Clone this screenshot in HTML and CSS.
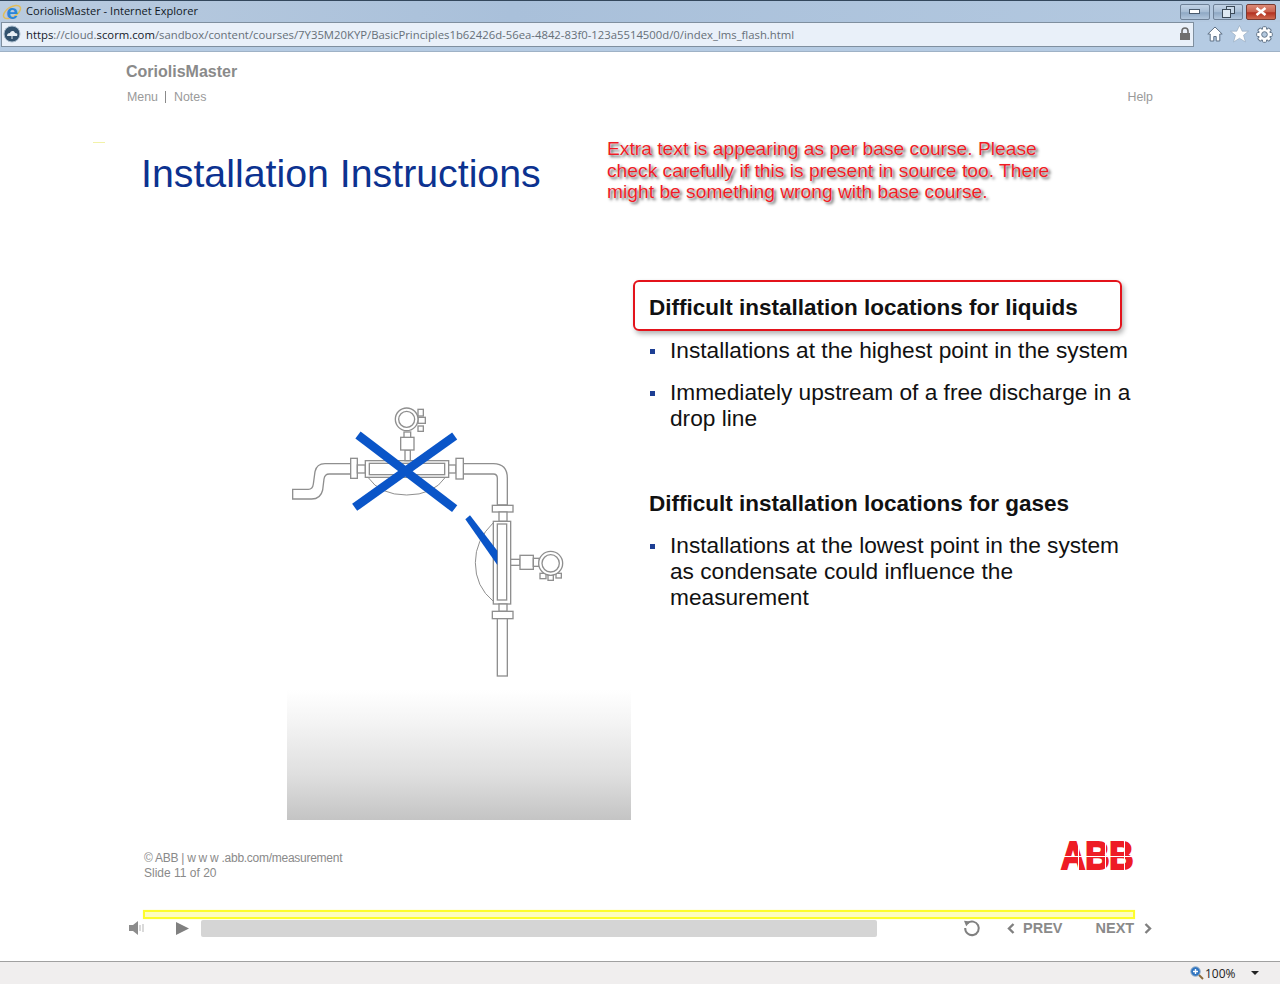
FILE: index.html
```html
<!DOCTYPE html>
<html>
<head>
  <title>CoriolisMaster - Internet Explorer</title>
  <link rel="stylesheet" href="styles.css">
</head>
<body>
  <div class="window">
    <div class="titlebar">
      <div class="ie-logo">
        <svg class="ie-ring" width="20" height="20" viewBox="0 0 20 20">
          <ellipse cx="10" cy="10" rx="9.500" ry="5" fill="none" stroke="#e0bd5a" stroke-width="1.500" transform="rotate(-32 10 10)"/>
        </svg>
        <span class="ie-letter">e</span>
      </div>
      <span class="window-title">CoriolisMaster - Internet Explorer</span>
      <div class="window-buttons">
        <div class="win-btn">
          <svg width="12" height="6" viewBox="0 0 12 6"><rect x="0.5" y="0.5" width="10" height="4" fill="#fff" stroke="#4a5a6c"/></svg>
        </div>
        <div class="win-btn">
          <svg width="13" height="12" viewBox="0 0 13 12"><rect x="4.5" y="0.5" width="8" height="7" fill="#c8d8e8" stroke="#3c4a58"/><rect x="0.5" y="3.5" width="8" height="8" fill="#dde8f2" stroke="#3c4a58"/></svg>
        </div>
        <div class="win-btn win-close">
          <svg width="12" height="9" viewBox="0 0 12 9"><path d="M1.5 1l9 7M10.5 1l-9 7" stroke="#fff" stroke-width="2.6" fill="none"/></svg>
        </div>
      </div>
    </div>

    <div class="addressbar">
      <div class="address-box">
        <svg class="site-icon" width="18" height="18" viewBox="0 0 18 18">
          <circle cx="9" cy="9" r="8" fill="#33536f" stroke="#a9bccd"/>
          <path d="M4 11c0-2 1-3 3-3 .5-2 4-3 5 0 2 0 3 1 2 3z" fill="#e8f0f6"/>
          <path d="M9 11v3" stroke="#e8f0f6"/>
        </svg>
        <span class="url">https<span class="url-dim">://cloud.</span>scorm.com<span class="url-dim">/sandbox/content/courses/7Y35M20KYP/BasicPrinciples1b62426d-56ea-4842-83f0-123a5514500d/0/index_lms_flash.html</span></span>
        <svg class="lock" width="12" height="14" viewBox="0 0 12 14">
          <path d="M3 6V4a3 3 0 0 1 6 0v2" fill="none" stroke="#6a6a6a" stroke-width="1.6"/>
          <rect x="1" y="6" width="10" height="7" fill="#6f6f6f"/>
        </svg>
      </div>
      <div class="tools">
        <svg width="16" height="16" viewBox="0 0 16 16"><path d="M8 1L.8 8h2.400v7h3.600v-4.500h2.400V15h3.600V8h2.400z" fill="#fff" stroke="#5f7186" stroke-linejoin="round"/></svg>
        <svg width="19" height="18" viewBox="0 0 17 16"><path d="M8.500 .4l2.400 5.100h5.600l-4.400 3.600 1.700 6-5.300-3.300-5.300 3.300 1.700-6L.5 5.500h5.600z" fill="#fff" stroke="#8ba0b6" stroke-width=".5"/></svg>
        <svg width="17" height="17" viewBox="0 0 17 17">
          <g fill="#fff" stroke="#66788c">
            <rect x="6.500" y=".7" width="4" height="15.600" rx="1"/>
            <rect x="6.500" y=".7" width="4" height="15.600" rx="1" transform="rotate(45 8.500 8.500)"/>
            <rect x="6.500" y=".7" width="4" height="15.600" rx="1" transform="rotate(90 8.500 8.500)"/>
            <rect x="6.500" y=".7" width="4" height="15.600" rx="1" transform="rotate(135 8.500 8.500)"/>
          </g>
          <circle cx="8.500" cy="8.500" r="5.500" fill="#fff"/>
          <circle cx="8.500" cy="8.500" r="2.800" fill="#b3c8de" stroke="#66788c"/>
        </svg>
      </div>
    </div>

    <div class="player">
      <div class="course-head">
        <div>
          <div class="course-name">CoriolisMaster</div>
          <div class="course-nav"><span>Menu</span><span class="nav-sep"></span><span>Notes</span></div>
        </div>
        <div class="help">Help</div>
      </div>

      <div class="slide-head">
        <div class="tick"></div>
        <h1 class="slide-title">Installation Instructions</h1>
        <p class="review-note">Extra text is appearing as per base course. Please check carefully if this is present in source too. There might be something wrong with base course.</p>
      </div>

      <div class="slide-body">
        <div class="figure">
          <svg class="diagram" width="345" height="290" viewBox="21 0 1035 870">
            <g fill="#fff" stroke="#8f8f8f" stroke-width="4">
              <!-- horizontal meter -->
              <path d="M212 191H135Q110 191 105 215L100 252Q98 268 85 268H38V297H95Q122 297 128 270L132 237Q134 222 148 222H212Z"/>
              <path d="M550 191H640Q682 191 682 235V315H652V235Q652 222 640 222H550Z"/>
              <path d="M264 232Q300 285 380 285T496 232" stroke-width="3"/>
              <rect x="212" y="175" width="20" height="60"/>
              <rect x="232" y="195" width="24" height="24"/>
              <rect x="256" y="182" width="250" height="50"/>
              <rect x="268" y="190" width="226" height="34"/>
              <rect x="506" y="195" width="22" height="24"/>
              <rect x="528" y="175" width="22" height="62"/>
              <rect x="375" y="150" width="16" height="32"/>
              <rect x="362" y="112" width="40" height="38"/>
              <rect x="372" y="96" width="20" height="16"/>
              <rect x="414" y="28" width="16" height="20"/>
              <rect x="414" y="52" width="22" height="18"/>
              <rect x="414" y="78" width="16" height="16"/>
              <circle cx="380" cy="58" r="34"/>
              <circle cx="380" cy="58" r="24"/>
              <!-- vertical meter -->
              <path d="M640 368Q586 420 586 488Q586 560 640 604" stroke-width="3"/>
              <rect x="637" y="316" width="62" height="20"/>
              <rect x="657" y="336" width="24" height="28"/>
              <rect x="640" y="364" width="52" height="248"/>
              <rect x="652" y="372" width="28" height="228"/>
              <rect x="657" y="612" width="24" height="22"/>
              <rect x="637" y="634" width="62" height="22"/>
              <rect x="652" y="656" width="30" height="172"/>
              <rect x="692" y="478" width="28" height="18"/>
              <rect x="720" y="466" width="40" height="42"/>
              <rect x="760" y="475" width="18" height="24"/>
              <rect x="780" y="520" width="18" height="16"/>
              <rect x="804" y="525" width="16" height="16"/>
              <rect x="828" y="520" width="16" height="14"/>
              <circle cx="812" cy="490" r="36"/>
              <circle cx="812" cy="490" r="26"/>
            </g>
            <g stroke="#0a55c8" stroke-width="26" fill="none">
              <path d="M234 105L524 326"/>
              <path d="M524 108L224 322"/>
            </g>
            <path d="M570 346L556 358L652 495V452Z" fill="#0a55c8"/>
          </svg>
          <div class="floor"></div>
        </div>

        <div class="points">
          <h2 class="boxed">Difficult installation locations for liquids</h2>
          <ul class="liquids">
            <li>Installations at the highest point in the system</li>
            <li>Immediately upstream of a free discharge in a drop line</li>
          </ul>
          <h2 class="gases">Difficult installation locations for gases</h2>
          <ul class="gas-list">
            <li>Installations at the lowest point in the system as condensate could influence the measurement</li>
          </ul>
        </div>
      </div>

      <div class="slide-foot">
        <div class="copyright">
          <div class="copy-line">&copy; ABB | w w w .abb.com/measurement</div>
          <div>Slide 11 of 20</div>
        </div>
        <div class="abb-logo"><span class="abb-text">ABB</span></div>
      </div>

      <div class="progress-mark"></div>

      <div class="controls">
        <svg class="speaker" width="16" height="14" viewBox="0 0 16 14"><path d="M0 4h4l5-4v14l-5-4H0z" fill="#8c8c8c"/><path d="M11 4v6M14 3v8" stroke="#b5b5b5"/></svg>
        <svg class="play" width="13" height="13" viewBox="0 0 13 13"><path d="M0 0l13 6.500L0 13z" fill="#808080"/></svg>
        <div class="seekbar"></div>
        <svg class="replay" width="18" height="18" viewBox="0 0 18 18"><path d="M4.500 4.200A6.800 6.800 0 1 1 2.200 9" fill="none" stroke="#808080" stroke-width="2"/><path d="M1 1.800L7.400 2.600L3.200 7.200Z" fill="#808080"/></svg>
        <div class="nav-btn prev">
          <svg width="8" height="11" viewBox="0 0 8 11"><path d="M6.500 1L2 5.500l4.500 4.500" fill="none" stroke="#808080" stroke-width="2.400"/></svg>
          <span>PREV</span>
        </div>
        <div class="nav-btn next">
          <span>NEXT</span>
          <svg width="8" height="11" viewBox="0 0 8 11"><path d="M1.500 1L6 5.500 1.500 10" fill="none" stroke="#808080" stroke-width="2.400"/></svg>
        </div>
      </div>
    </div>

    <div class="statusbar">
      <svg width="14" height="14" viewBox="0 0 14 14"><circle cx="5.500" cy="5.500" r="4.800" fill="#2f74c0" stroke="#9fb6cc"/><path d="M3 5.500h5M5.500 3v5" stroke="#fff" stroke-width="1.400"/><path d="M9 9l4 4" stroke="#8a6a3a" stroke-width="2"/></svg>
      <span class="zoom-value">100%</span>
      <span class="zoom-arrow"></span>
    </div>
  </div>
</body>
</html>
```

FILE: styles.css
```css
html, body {
  margin: 0;
  height: 100%;
  overflow: hidden;
  background: #fff;
  font-family: "Liberation Sans", Arial, sans-serif;
}

.window {
  display: flex;
  flex-direction: column;
  width: 1280px;
  height: 984px;
}

/* browser chrome */
.titlebar {
  display: flex;
  align-items: center;
  height: 22px;
  box-sizing: border-box;
  padding-left: 2px;
  border-top: 1px solid #33475c;
  background: linear-gradient(to right, #b9cbdf, #a9c0da 40%, #b4c9e0);
}

.ie-logo {
  position: relative;
  width: 20px;
  height: 20px;
  text-align: center;
}

.ie-ring {
  position: absolute;
  left: 0;
  top: 0;
}

.ie-letter {
  position: relative;
  font-size: 21px;
  font-weight: bold;
  line-height: 20px;
  color: #2a86d8;
}

.window-title {
  margin: 0 0 2px 4px;
  font-family: "Open Sans", sans-serif;
  font-size: 11.100px;
  color: #10181f;
}

.window-buttons {
  display: flex;
  gap: 3px;
  margin-left: auto;
  margin-right: 4px;
}

.win-btn {
  display: flex;
  align-items: center;
  justify-content: center;
  width: 30px;
  height: 16px;
  box-sizing: border-box;
  border: 1px solid #6e8197;
  border-radius: 2px;
  background: linear-gradient(#c2d3e6, #a6bcd4 50%, #8ea8c4 55%, #b2c6dc);
}

.win-close {
  border-color: #7a3a30;
  background: linear-gradient(#dc8a78, #c9604c 50%, #b23020 55%, #cf6a50);
}

.addressbar {
  display: flex;
  align-items: center;
  height: 30px;
  box-sizing: border-box;
  padding: 0 0 5px 1px;
  border-bottom: 1px solid #9fb2c6;
  background: #b5cbe3;
}

.address-box {
  display: flex;
  align-items: center;
  width: 1193px;
  height: 25px;
  box-sizing: border-box;
  border: 1px solid #7f8f9f;
  background: #e9f0f9;
}

.site-icon {
  margin: 0 5px 0 1px;
}

.url {
  font-family: "Open Sans", sans-serif;
  font-size: 11.320px;
  color: #16202a;
}

.url-dim {
  color: #666f78;
}

.lock {
  margin-left: auto;
  margin-right: 2px;
}

.tools {
  display: flex;
  align-items: center;
  gap: 7px;
  margin-left: 13px;
}

/* course player */
.player {
  flex: 1;
  display: flex;
  flex-direction: column;
  background: #fff;
}

.course-head {
  display: flex;
  justify-content: space-between;
  align-items: flex-end;
  height: 42px;
  padding: 10px 127px 0 126px;
  color: #9a9a9a;
  font-size: 12.400px;
}

.course-name {
  font-size: 16px;
  font-weight: bold;
  line-height: 20px;
  color: #8a8a8a;
}

.course-nav {
  display: flex;
  align-items: center;
  margin: 8px 0 0 1px;
  line-height: 14px;
}

.nav-sep {
  width: 1px;
  height: 12px;
  margin: 0 8px 0 7px;
  background: #8a8a8a;
}

.help {
  line-height: 14px;
}

.slide-head {
  display: flex;
  height: 176px;
  padding-left: 93px;
}

.tick {
  width: 12px;
  height: 1px;
  margin-top: 38px;
  background: #f2f2a8;
}

.slide-title {
  width: 466px;
  margin: 45px 0 0 36px;
  font-size: 39.300px;
  font-weight: normal;
  line-height: 48px;
  color: #0c3290;
}

.review-note {
  width: 460px;
  margin: 34px 0 0 0;
  font-size: 19.240px;
  line-height: 21.500px;
  color: #ee1c25;
  text-shadow: 0 0 1px #fff, 2px 2px 3px #555;
}

.slide-body {
  display: flex;
  height: 539px;
  padding-left: 287px;
}

.figure {
  width: 345px;
  padding-top: 120px;
}

.diagram {
  display: block;
}

.floor {
  width: 344px;
  height: 130px;
  background: linear-gradient(#fff, #f4f4f4 25%, #dfdfdf 65%, #c4c4c4);
}

.points {
  width: 490px;
  color: #111;
}

.points h2 {
  margin: 0;
  font-size: 22.500px;
  font-weight: bold;
  line-height: 28px;
}

.points .boxed {
  width: 489px;
  height: 51px;
  box-sizing: border-box;
  margin-left: 1px;
  padding: 12px 0 0 14px;
  border: 2px solid #e3131b;
  border-radius: 6px;
  box-shadow: 2px 3px 5px rgba(0, 0, 0, 0.3);
}

.points .gases {
  margin-left: 17px;
}

ul {
  list-style: none;
  margin: 0;
  padding: 0 0 0 38px;
  font-size: 22.700px;
  line-height: 26px;
}

li {
  position: relative;
  margin-bottom: 16px;
  width: 468px;
}

li::before {
  content: "";
  position: absolute;
  left: -20px;
  top: 12px;
  width: 5px;
  height: 5px;
  background: #1d3f94;
}

.liquids {
  margin-top: 6px;
  margin-bottom: 59px;
}

.gas-list {
  margin-top: 14px;
}

.slide-foot {
  display: flex;
  justify-content: space-between;
  align-items: flex-start;
  height: 91px;
  padding: 0 145px 0 144px;
  box-sizing: border-box;
  color: #8a8a8a;
  font-size: 12px;
  line-height: 15px;
}

.copyright {
  margin-top: 32px;
}

.copy-line {
  letter-spacing: -0.270px;
}

.abb-logo {
  position: relative;
  width: 74px;
  height: 28px;
  margin-top: 23px;
}

.abb-text {
  display: block;
  width: 82px;
  font-size: 38px;
  font-weight: bold;
  line-height: 28px;
  color: #ee1c25;
  -webkit-text-stroke: 2px #ee1c25;
  transform: scaleX(0.88);
  transform-origin: left center;
}

/* white cuts across the letters */
.abb-logo::after {
  content: "";
  position: absolute;
  left: -2px;
  right: -2px;
  top: -2px;
  bottom: -2px;
  background:
    linear-gradient(#fff, #fff) 19px 0 / 1px 100% no-repeat,
    linear-gradient(#fff, #fff) 46px 0 / 1px 100% no-repeat,
    linear-gradient(#fff, #fff) 65px 0 / 1px 100% no-repeat,
    linear-gradient(#fff, #fff) 0 16px / 100% 1px no-repeat;
}

.progress-mark {
  width: 992px;
  height: 9px;
  box-sizing: border-box;
  margin-left: 143px;
  border: 2px solid #fdfd2c;
  background: #fdfdc0;
  box-shadow: 0 0 1px #fdfd90;
}

.controls {
  display: flex;
  align-items: center;
  height: 18px;
  padding-left: 129px;
}

.play {
  margin-left: 31px;
}

.seekbar {
  width: 676px;
  height: 17px;
  margin-left: 12px;
  border-radius: 2px;
  background: #d5d5d5;
}

.replay {
  margin-left: 86px;
}

.nav-btn {
  display: flex;
  align-items: center;
  font-size: 14.500px;
  font-weight: bold;
  color: #8a8a8a;
}

.prev {
  gap: 8px;
  margin-left: 26px;
}

.next {
  gap: 10px;
  margin-left: 33px;
}

.statusbar {
  display: flex;
  align-items: center;
  height: 23px;
  box-sizing: border-box;
  padding-left: 1190px;
  border-top: 1px solid #a0a0a0;
  background: #f0eeee;
  font-family: "Open Sans", sans-serif;
  font-size: 12px;
  color: #222;
}

.zoom-value {
  margin-left: 1px;
}

.zoom-arrow {
  width: 0;
  height: 0;
  margin-left: 15px;
  border-left: 4px solid transparent;
  border-right: 4px solid transparent;
  border-top: 4px solid #222;
}
```
